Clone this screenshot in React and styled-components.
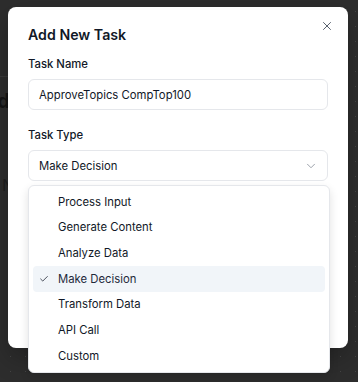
import React from "react";
import styled, { createGlobalStyle } from "styled-components";
import { X, ChevronDown, Check } from "lucide-react";

const Global = createGlobalStyle`
  html, body { margin: 0; padding: 0; }
  body {
    width: 358px; height: 382px; overflow: hidden;
    font-family: Inter, "Noto Sans", sans-serif;
    -webkit-font-smoothing: antialiased;
  }
`;

const Stage = styled.div`
  position: relative;
  width: 358px;
  height: 382px;
  overflow: hidden;
  background-color: #2d2d2d;
  background-image: radial-gradient(circle, #454545 0.8px, transparent 1px);
  background-size: 15px 15px;
  background-position: 3px 4px;
`;

const PageBehind = styled.div`
  display: flex;
  flex-direction: column;
  padding-top: 76px;
`;

const Divider = styled.div`
  height: 1px;
  width: 40px;
  background: #3a3a3a;
`;

const GhostHeading = styled.div`
  margin-top: 12px;
  margin-left: -52px;
  font-size: 20px;
  font-weight: 700;
  color: #141414;
`;

const GhostText = styled.div`
  margin-top: 62px;
  margin-left: 2px;
  font-size: 16px;
  color: #1f1f1f;
`;

const Dialog = styled.div`
  position: absolute;
  left: 8px;
  top: 7px;
  width: 340px;
  height: 341px;
  box-sizing: border-box;
  background: #ffffff;
  border-radius: 8px;
  padding: 18px 20px;
  box-shadow: 0 10px 25px rgba(0, 0, 0, 0.25);
`;

const CloseButton = styled.button`
  position: absolute;
  right: 13px;
  top: 11px;
  width: 16px;
  height: 16px;
  padding: 0;
  border: 0;
  background: transparent;
  color: #4b5563;
  display: flex;
  align-items: center;
  justify-content: center;
`;

const Title = styled.h2`
  margin: 0;
  font-size: 14.2px;
  line-height: 20px;
  font-weight: 600;
  color: #111827;
`;

const Field = styled.div`
  display: flex;
  flex-direction: column;
  gap: 7px;
  margin-top: ${(p) => p.$mt}px;
`;

const Label = styled.label`
  font-size: 11.3px;
  line-height: 16px;
  font-weight: 500;
  color: #111827;
`;

const Box = styled.div`
  height: 31px;
  box-sizing: border-box;
  border: 1px solid #e5e7eb;
  border-radius: 6px;
  padding: 0 10px;
  display: flex;
  align-items: center;
  justify-content: space-between;
  font-size: 11.3px;
  color: #111827;
`;

const Chevron = styled.span`
  display: flex;
  color: #6b7280;
  opacity: 0.7;
  margin-right: -1px;
`;

const Menu = styled.div`
  position: absolute;
  left: 28px;
  top: 185px;
  width: 302px;
  box-sizing: border-box;
  padding: 3px 4px;
  background: #ffffff;
  border: 1px solid #e5e7eb;
  border-radius: 6px;
  box-shadow: 0 4px 10px rgba(0, 0, 0, 0.12);
  display: flex;
  flex-direction: column;
`;

const Item = styled.div`
  height: 25.67px;
  display: flex;
  align-items: center;
  padding-left: 25px;
  position: relative;
  border-radius: 4px;
  font-size: 11.3px;
  color: ${(p) => (p.$active ? "#1e293b" : "#111827")};
  background: ${(p) => (p.$active ? "#f1f5f9" : "transparent")};
`;

const CheckMark = styled.span`
  position: absolute;
  left: 6px;
  top: 50%;
  transform: translateY(-50%);
  display: flex;
  color: #111827;
`;

const options = [
  "Process Input",
  "Generate Content",
  "Analyze Data",
  "Make Decision",
  "Transform Data",
  "API Call",
  "Custom",
];

export default function App() {
  const selected = "Make Decision";
  return (
    <>
      <Global />
      <Stage>
        <PageBehind>
          <Divider />
          <GhostHeading>Schedule</GhostHeading>
          <GhostText>N</GhostText>
        </PageBehind>
        <Dialog>
          <CloseButton aria-label="Close">
            <X size={14} strokeWidth={1.6} />
          </CloseButton>
          <Title>Add New Task</Title>
          <Field $mt={11}>
            <Label>Task Name</Label>
            <Box>ApproveTopics CompTop100</Box>
          </Field>
          <Field $mt={17}>
            <Label>Task Type</Label>
            <Box>
              {selected}
              <Chevron>
                <ChevronDown size={14} strokeWidth={1.6} />
              </Chevron>
            </Box>
          </Field>
        </Dialog>
        <Menu>
          {options.map((o) => (
            <Item key={o} $active={o === selected}>
              {o === selected && (
                <CheckMark>
                  <Check size={10} strokeWidth={1.8} />
                </CheckMark>
              )}
              {o}
            </Item>
          ))}
        </Menu>
      </Stage>
    </>
  );
}
